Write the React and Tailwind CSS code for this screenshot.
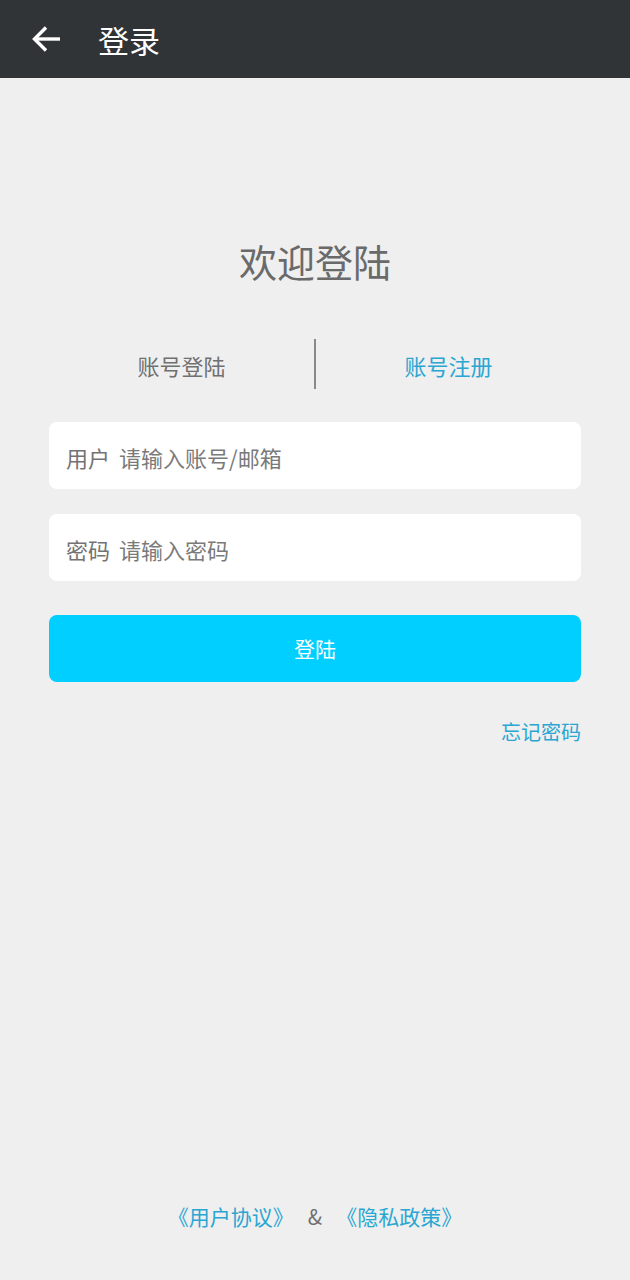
import React from 'react';

const font = { fontFamily: '"Noto Sans CJK SC", "Noto Sans", sans-serif' };

const App = () => {
  return (
    <div className="min-h-screen bg-[#efefef] flex flex-col" style={font}>
      <header className="h-[78px] bg-[#313437] flex items-center shrink-0">
        <button className="ml-[30px] w-[32px] h-[32px] flex items-center justify-center">
          <svg width="32" height="32" viewBox="0 0 32 32" fill="none" stroke="white" strokeWidth="3.4" strokeLinecap="butt" strokeLinejoin="miter">
            <path d="M30 16H5" />
            <path d="M16 4.5L4.5 16L16 27.5" />
          </svg>
        </button>
        <h1 className="ml-[36px] text-[31px] leading-none text-white">登录</h1>
      </header>

      <main className="px-[49px] pt-[156px]">
        <h2 className="text-center text-[38px] leading-[54px] text-[#6a6a6a]">欢迎登陆</h2>

        <div className="mt-[51px] flex items-center h-[50px]">
          <div className="flex-1 text-center text-[22px] pt-[3px] text-[#707070]">账号登陆</div>
          <div className="w-[2px] h-[50px] bg-[#8a8a8a]"></div>
          <div className="flex-1 text-center text-[22px] pt-[3px] text-[#2aa6d3]">账号注册</div>
        </div>

        <div className="mt-[33px] h-[67px] bg-white rounded-[8px] flex items-center px-[17px] pt-[3px] text-[22px] text-[#737373]">
          <span>用户</span>
          <span className="ml-[9px] text-[#7a7a7a]">请输入账号/邮箱</span>
        </div>

        <div className="mt-[25px] h-[67px] bg-white rounded-[8px] flex items-center px-[17px] pt-[3px] text-[22px] text-[#737373]">
          <span>密码</span>
          <span className="ml-[9px] text-[#7a7a7a]">请输入密码</span>
        </div>

        <button className="mt-[34px] w-full h-[67px] bg-[#00cfff] rounded-[8px] text-white text-[21px]">
          登陆
        </button>

        <div className="mt-[36px] text-right text-[20px] leading-[28px] text-[#2aa6d3]">忘记密码</div>
      </main>

      <footer className="mt-auto pb-[49px] text-center text-[21px] leading-[30px]">
        <span className="text-[#2aa6d3]">《用户协议》</span>
        <span className="mx-[14px] text-[#707070]">&amp;</span>
        <span className="text-[#2aa6d3]">《隐私政策》</span>
      </footer>
    </div>
  );
};

export default App;
